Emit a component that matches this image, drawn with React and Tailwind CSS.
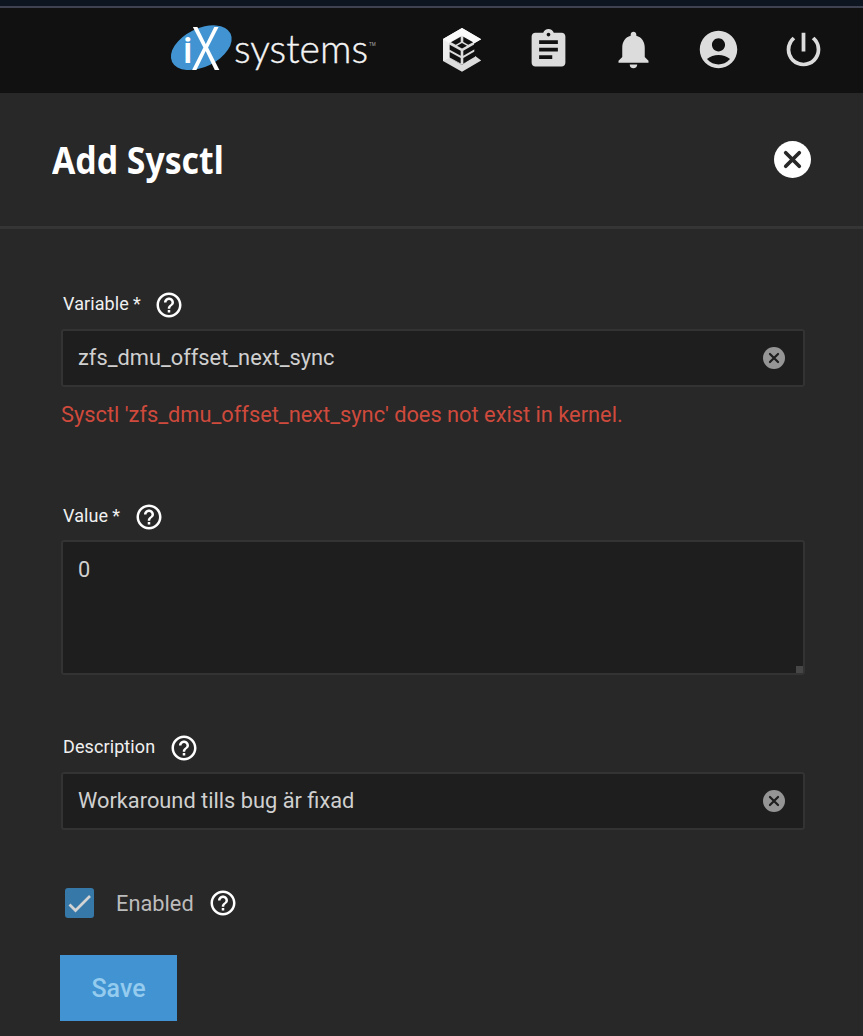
import React from 'react';
import {
  MdAssignment,
  MdNotifications,
  MdAccountCircle,
  MdPowerSettingsNew,
  MdHelpOutline,
} from 'react-icons/md';

function IxLogo() {
  return (
    <svg width="208" height="70" viewBox="0 -8 208 70" className="block shrink-0 overflow-visible" aria-label="iXsystems">
      <ellipse cx="31.3" cy="25.7" rx="32.5" ry="19.2" transform="rotate(-26 31.3 25.7)" fill="#4194d1" />
      <text x="13" y="41" fontFamily="Roboto" fontSize="37" fontWeight="500" fill="#fff">i</text>
      <text fontFamily="Open Sans" fontSize="61" fontWeight="400" fill="#fff" transform="translate(22 47.5) scale(0.78 1)">X</text>
      <text x="64" y="40.8" fontFamily="Lato" fontSize="40" fontWeight="300" fill="#f4f4f4" stroke="#f4f4f4" strokeWidth="0.4" textLength="134" lengthAdjust="spacingAndGlyphs">systems</text>
      <text x="199" y="23.500" fontFamily="Roboto" fontSize="4.500" fill="#aaa">TM</text>
    </svg>
  );
}

function TrueCommandIcon() {
  return (
    <svg width="40" height="46" viewBox="0 0 40 46" className="block">
      <path d="M20 1 39.200 12.200 31 17 20 9 7 16v16.500L1 34V12Z" fill="#fafafa" />
      <path d="M1 34 7 30.500 20 38 32.500 28.500 39.200 33.500 20 44.700Z" fill="#dcdcdc" />
      <path d="M1 12 7 15.500V31L1 34Z" fill="#ededed" />
      <path d="M7 15.500 20 8 32.500 15.500V28L20 38 7 31Z" fill="#dcdcdc" />
      <path d="M20 1 39.200 12.200 32 16.500 20 8.500 7 16 1 12Z" fill="#fafafa" />
      <g fill="#111">
        <path d="M18.700 9.700v5.200L13.800 17.700 9 15.300ZM21.300 9.700v5.200l4.900 2.800 5-2.400Z" />
        <path d="M20 16 25 18.800 20 21.600 15 18.800Z" />
        <path d="M7.700 17.700 18.700 23.700v5L7.700 22.700ZM21.300 23.700 33 17v5l-11.700 6.700Z" />
        <path d="M7.700 25 18.700 31v5.600L7.700 30.500ZM21.300 31 33 24.300v5.500l-11.700 6.800Z" />
        <path d="M32 16.800 39 13v16.500l-6-2Z" />
      </g>
    </svg>
  );
}

function CircleX({ size, fill, cross }) {
  return (
    <svg width={size} height={size} viewBox="0 0 37 37" className="block shrink-0">
      <circle cx="18.500" cy="18.500" r="18.500" fill={fill} />
      <path d="M11.700 11.700 25.300 25.300M25.300 11.700 11.700 25.300" stroke={cross} strokeWidth="3.700" strokeLinecap="round" />
    </svg>
  );
}

function FieldLabel({ text, required, className }) {
  return (
    <div className={`flex h-[30px] items-center text-[18px] text-[#f0f0f0] ${className}`}>
      <span className="pb-[3px] tracking-[0.1px]">
        {text}
        {required && <span className="pl-[4px]">*</span>}
      </span>
      <MdHelpOutline size={30} color="#fff" className="shrink-0" />
    </div>
  );
}

export default function App() {
  return (
    <div className="flex h-[1036px] w-[863px] flex-col overflow-hidden bg-[#282828] font-['Roboto',sans-serif]">
      <div className="h-[8px] shrink-0 border-b-2 border-[#3f4250] bg-[#0d1520]" />
      <header className="flex h-[85px] shrink-0 items-start bg-[#111111] pl-[170px] pt-[6px]">
        <IxLogo />
        <nav className="flex pl-[64px] pt-[13px] text-[#dcdcdc]">
          <div className="flex w-[83.500px]"><TrueCommandIcon /></div>
          <div className="flex w-[85.300px]"><MdAssignment size={45} /></div>
          <div className="flex w-[85.300px]"><MdNotifications size={45} /></div>
          <div className="flex w-[85.300px]"><MdAccountCircle size={45} /></div>
          <MdPowerSettingsNew size={45} />
        </nav>
      </header>

      <div className="flex h-[136px] shrink-0 items-start justify-between border-b-[3px] border-[#353535] pl-[52px] pr-[52px] pt-[48px]">
        <h1 className="-mt-px h-[46px] origin-left scale-x-[0.9] whitespace-nowrap font-['Noto_Sans',sans-serif] text-[37.500px] font-bold leading-[40px] text-white">Add Sysctl</h1>
        <button aria-label="Close"><CircleX size={37} fill="#ffffff" cross="#282828" /></button>
      </div>

      <main className="flex flex-col pl-[61px] pr-[58px] pt-[61px]">
        <FieldLabel className="gap-[13px] pl-[2px]" text="Variable" required />
        <div className="mt-[9px] flex h-[58px] items-center justify-between rounded-[3px] border-2 border-[#333333] bg-[#1e1e1e] pl-[15px] pr-[18px] text-[21.800px] text-[#d0d0d0]">
          <span>zfs_dmu_offset_next_sync</span>
          <CircleX size={22} fill="#959595" cross="#1e1e1e" />
        </div>
        <p className="mt-[11px] h-[33px] whitespace-nowrap text-[21.800px] leading-[34px] text-[#cf4a3c]">Sysctl 'zfs_dmu_offset_next_sync' does not exist in kernel.</p>

        <FieldLabel className="mt-[71px] gap-[14px] pl-[2px]" text="Value" required />
        <div className="mt-[8px] flex h-[135px] items-end justify-between rounded-[3px] border-2 border-[#333333] bg-[#1e1e1e] pl-[15px] text-[21.800px] text-[#d0d0d0]">
          <span className="self-start pt-[15px] leading-[26px]">0</span>
          <span className="h-[7px] w-[7px] bg-[#464646]" />
        </div>

        <FieldLabel className="mt-[58px] gap-[14px] pl-[2px]" text="Description" />
        <div className="mt-[9px] flex h-[58px] items-center justify-between rounded-[3px] border-2 border-[#333333] bg-[#1e1e1e] pl-[15px] pr-[18px] text-[21.800px] text-[#d0d0d0]">
          <span className="pt-[1px]">Workaround tills bug är fixad</span>
          <CircleX size={22} fill="#959595" cross="#1e1e1e" />
        </div>

        <label className="mt-[58px] flex h-[30px] items-center pl-[4px] text-[21.800px] text-[#bcbcbc]">
          <svg width="29" height="30" viewBox="0 0 29 30" className="block">
            <rect width="29" height="30" rx="3" fill="#3679a9" />
            <path d="M4.500 16.500 10.500 22.500 25 8" fill="none" stroke="#d3d3d3" strokeWidth="2.700" />
          </svg>
          <span className="pl-[22px] pr-[14px] pt-[2px]">Enabled</span>
          <MdHelpOutline size={30} color="#fff" />
        </label>
        <button className="-ml-px mt-[37px] flex h-[66px] w-[117px] items-center justify-center bg-[#4194d1] pt-[2px] text-[25px] font-medium text-[#94cbee]">Save</button>
      </main>
    </div>
  );
}
